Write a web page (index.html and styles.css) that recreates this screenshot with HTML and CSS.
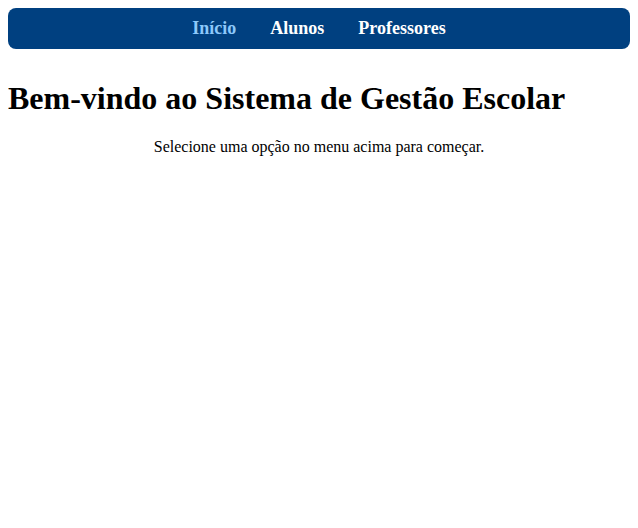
FILE: index.html
```html
<!DOCTYPE html>
<html lang="pt">
<head>
<meta charset="utf-8">
<title>Sistema de Gestão Escolar</title>
<link rel="stylesheet" href="styles.css">
</head>
<body>
<nav class="menu">
  <a class="menu-link active" href="#">Início</a>
  <a class="menu-link" href="#">Alunos</a>
  <a class="menu-link" href="#">Professores</a>
</nav>
<h1 class="title">Bem-vindo ao Sistema de Gestão Escolar</h1>
<p class="intro">Selecione uma opção no menu acima para começar.</p>
</body>
</html>
```
FILE: styles.css
```css
body {
  margin: 8px;
  font-family: "Liberation Serif", "Times New Roman", serif;
  background: #fff;
  color: #000;
}
.menu {
  background: #004080;
  border-radius: 8px;
  padding: 10px;
  text-align: center;
}
.menu-link {
  color: #fff;
  text-decoration: none;
  font-weight: bold;
  font-size: 18px;
  margin: 0 15px;
}
.menu-link.active {
  color: #8cc8fa;
}
.title {
  font-size: 32px;
  margin: 31px 0 21px;
}
.intro {
  text-align: center;
  font-size: 16px;
}
```
